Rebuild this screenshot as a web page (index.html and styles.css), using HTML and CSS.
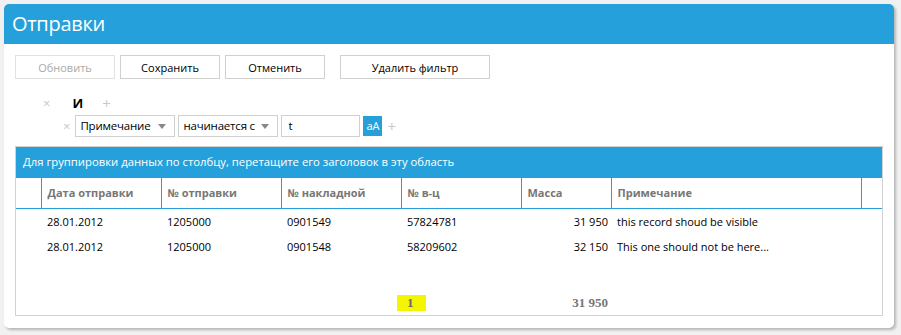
FILE: index.html
```html
<!DOCTYPE html>
<html>

<head>
    <meta charset="UTF-8">
    <title>Отправки</title>
    <link rel="stylesheet" href="styles.css">
</head>

<body>
    <div class="panel">
        <div class="panel-title">Отправки</div>
        <div class="panel-body">
            <div class="toolbar">
                <button class="btn" disabled>Обновить</button>
                <button class="btn">Сохранить</button>
                <button class="btn">Отменить</button>
                <button class="btn btn-wide">Удалить фильтр</button>
            </div>

            <div class="filter">
                <div class="filter-group">
                    <span class="f-remove">×</span>
                    <span class="f-op">И</span>
                    <span class="f-add">+</span>
                </div>
                <div class="filter-row">
                    <span class="f-remove">×</span>
                    <div class="f-select">Примечание<span class="f-arrow"></span></div>
                    <div class="f-select">начинается с<span class="f-arrow"></span></div>
                    <div class="f-input">t</div>
                    <span class="f-case">aA</span>
                    <span class="f-add">+</span>
                </div>
            </div>

            <div class="grid">
                <div class="group-panel">Для группировки данных по столбцу, перетащите его заголовок в эту область</div>
                <table class="grid-table">
                    <colgroup>
                        <col style="width: 25px">
                        <col style="width: 120px">
                        <col style="width: 120px">
                        <col style="width: 120px">
                        <col style="width: 120px">
                        <col style="width: 90px">
                        <col style="width: 250px">
                        <col>
                    </colgroup>
                    <thead>
                        <tr>
                            <th></th>
                            <th>Дата отправки</th>
                            <th>№ отправки</th>
                            <th>№ накладной</th>
                            <th>№ в-ц</th>
                            <th>Масса</th>
                            <th>Примечание</th>
                            <th class="last"></th>
                        </tr>
                    </thead>
                    <tbody>
                        <tr>
                            <td></td>
                            <td>28.01.2012</td>
                            <td>1205000</td>
                            <td>0901549</td>
                            <td>57824781</td>
                            <td class="num">31 950</td>
                            <td>this record shoud be visible</td>
                            <td></td>
                        </tr>
                        <tr>
                            <td></td>
                            <td>28.01.2012</td>
                            <td>1205000</td>
                            <td>0901548</td>
                            <td>58209602</td>
                            <td class="num">32 150</td>
                            <td>This one should not be here...</td>
                            <td></td>
                        </tr>
                        <tr class="filler">
                            <td colspan="8"></td>
                        </tr>
                    </tbody>
                    <tfoot>
                        <tr>
                            <td></td>
                            <td></td>
                            <td></td>
                            <td></td>
                            <td><span class="mark">1</span></td>
                            <td class="num">31 950</td>
                            <td></td>
                            <td></td>
                        </tr>
                    </tfoot>
                </table>
            </div>
        </div>
    </div>
</body>

</html>
```

FILE: styles.css
```css
body {
    margin: 0;
    padding: 4px;
    background-color: #f1f1f1;
    font-family: "Open Sans", "Noto Sans", sans-serif;
    font-size: 11px;
    color: #000;
}

.panel {
    width: 890px;
    height: 324px;
    background-color: #fff;
    border-radius: 5px;
    box-shadow: 2px 2px 3px rgba(0, 0, 0, 0.25);
    overflow: hidden;
    box-sizing: border-box;
}

.panel-title {
    height: 40px;
    background-color: #26a0da;
    color: #fff;
    font-size: 20px;
    line-height: 40px;
    padding-left: 8px;
    letter-spacing: -0.3px;
}

.panel-body {
    padding: 11px 11px 0 11px;
}

.toolbar {
    display: flex;
    gap: 5px;
}

.btn {
    box-sizing: border-box;
    width: 100px;
    height: 24px;
    background-color: #fff;
    border: 1px solid #d0d0d0;
    font-family: inherit;
    font-size: 11px;
    color: #000;
    padding: 0;
}

.btn:disabled {
    color: #aaa;
    border-color: #e2e2e2;
}

.btn-wide {
    width: 150px;
    margin-left: 10px;
}

.filter {
    padding: 14px 0 0 28px;
    height: 67px;
    box-sizing: border-box;
}

.filter-group {
    display: flex;
    align-items: center;
    height: 20px;
}

.filter-group .f-op {
    font-weight: bold;
    font-size: 13px;
    margin: 0 19px 0 22px;
}

.f-remove {
    color: #c8c8c8;
    font-size: 13px;
}

.f-add {
    color: #c8c8c8;
    font-size: 15px;
}

.filter-row {
    display: flex;
    align-items: center;
    gap: 3px;
    padding-left: 20px;
    margin-top: 2px;
}

.f-select,
.f-input {
    position: relative;
    width: 100px;
    height: 22px;
    border: 1px solid #d0d0d0;
    box-sizing: border-box;
    line-height: 20px;
    padding-left: 4px;
    font-size: 11.5px;
    letter-spacing: -0.2px;
    white-space: nowrap;
}

.filter-row .f-remove {
    margin-right: 2px;
}

.f-input {
    width: 79px;
    padding-left: 6px;
}

.f-arrow {
    position: absolute;
    right: 8px;
    top: 8px;
    border-left: 4px solid transparent;
    border-right: 4px solid transparent;
    border-top: 5px solid #888;
}

.f-case {
    width: 19px;
    height: 20px;
    background-color: #26a0da;
    color: #fff;
    font-size: 11px;
    line-height: 20px;
    text-align: center;
}

.filter-row .f-add {
    margin-left: 2px;
}

.grid {
    width: 868px;
    height: 170px;
    border: 1px solid #d2d2d2;
    box-sizing: border-box;
    display: flex;
    flex-direction: column;
}

.group-panel {
    height: 31px;
    background-color: #26a0da;
    color: #fff;
    line-height: 30px;
    padding-left: 7px;
    font-size: 11.3px;
    flex-shrink: 0;
}

.grid-table {
    width: 866px;
    border-collapse: collapse;
    table-layout: fixed;
    flex: 1;
}

.grid-table th {
    height: 30px;
    box-sizing: border-box;
    text-align: left;
    font-weight: bold;
    color: #777;
    padding: 0 6px;
    border-left: 1px solid #26a0da;
    border-bottom: 1px solid #26a0da;
}

.grid-table th:first-child {
    border-left: none;
}

.grid-table td {
    height: 25px;
    padding: 0 6px;
    white-space: nowrap;
    overflow: hidden;
}

.grid-table td.num {
    text-align: right;
    padding-right: 3px;
}

.filler td {
    height: auto;
}

.grid-table tfoot td {
    height: 28px;
    font-family: "Liberation Serif", serif;
    font-weight: bold;
    font-size: 13px;
    color: #777;
    vertical-align: bottom;
    padding-bottom: 4px;
    overflow: visible;
}

.mark {
    display: inline-block;
    background-color: #f5f500;
    color: #666;
    padding: 0 12px 0 10px;
    margin-left: -10px;
    line-height: 16px;
}
```
